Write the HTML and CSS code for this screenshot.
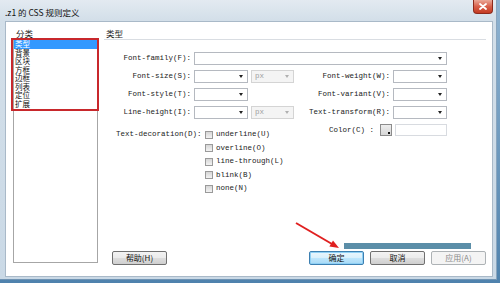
FILE: index.html
```html
<!DOCTYPE html>
<html>
<head>
<meta charset="utf-8">
<link rel="stylesheet" href="styles.css">
</head>
<body>
<div class="win">
  <div class="titlebar">
    <span class="title">.z1 的 CSS 规则定义</span>
    <div class="close">
      <svg width="8" height="7" viewBox="0 0 8 7"><path d="M1 1 L7 6 M7 1 L1 6" stroke="#fff" stroke-width="1.8" stroke-linecap="round"/></svg>
    </div>
  </div>
  <div class="client">
    <div class="cat">
      <div class="cat-label">分类</div>
      <div class="listbox">
        <div class="item sel">类型</div>
        <div class="item">背景</div>
        <div class="item">区块</div>
        <div class="item">方框</div>
        <div class="item">边框</div>
        <div class="item">列表</div>
        <div class="item">定位</div>
        <div class="item">扩展</div>
        <div class="mark"></div>
      </div>
    </div>
    <div class="panel">
      <div class="panel-head">类型</div>
      <div class="form mono">
        <div class="lab">Font-family(F):</div>
        <div class="combo wide"></div>
        <div class="lab">Font-size(S):</div>
        <div class="combo"></div>
        <div class="combo dis">px</div>
        <div class="lab">Font-weight(W):</div>
        <div class="combo"></div>
        <div class="lab">Font-style(T):</div>
        <div class="combo"></div>
        <div></div>
        <div class="lab">Font-variant(V):</div>
        <div class="combo"></div>
        <div class="lab">Line-height(I):</div>
        <div class="combo"></div>
        <div class="combo dis">px</div>
        <div class="lab">Text-transform(R):</div>
        <div class="combo"></div>
      </div>
      <div class="deco mono">
        <div class="deco-lab">Text-decoration(D):</div>
        <div class="checks">
          <div class="chk"><span class="box"></span>underline(U)</div>
          <div class="chk"><span class="box"></span>overline(O)</div>
          <div class="chk"><span class="box"></span>line-through(L)</div>
          <div class="chk"><span class="box"></span>blink(B)</div>
          <div class="chk"><span class="box"></span>none(N)</div>
        </div>
        <div class="color">
          <span class="color-lab">Color(C) :</span>
          <span class="swatch"></span>
          <span class="field"></span>
        </div>
      </div>
      <div class="buttons">
        <div class="btn">帮助(H)</div>
        <div class="btn def push">确定</div>
        <div class="btn">取消</div>
        <div class="btn dis">应用(A)</div>
      </div>
    </div>
  </div>
</div>
<div class="bar"></div>
<svg class="arrow" width="500" height="283" viewBox="0 0 500 283">
  <line x1="296" y1="223" x2="332" y2="244" stroke="#e02020" stroke-width="2"/>
  <polygon points="339,248 329.4,246.5 333,240.5" fill="#e02020"/>
</svg>
</body>
</html>
```

FILE: styles.css
```css
* { box-sizing: border-box; }
html, body { margin: 0; padding: 0; }
body {
  width: 500px;
  height: 283px;
  overflow: hidden;
  position: relative;
  background: linear-gradient(180deg, #8fb3d1 0%, #4f82ad 100%);
  font-family: "Noto Sans CJK SC", "Liberation Sans", sans-serif;
  color: #1a1a1a;
}
.win {
  width: 497px;
  height: 280px;
  display: flex;
  flex-direction: column;
  background: linear-gradient(180deg, #e3eaf1 0px, #d3dfe9 20px, #cad9e6 100%);
  border-right: 1px solid #8aa6bf;
  border-bottom: 1px solid #6f93b3;
}
.titlebar {
  height: 21px;
  display: flex;
  justify-content: space-between;
  align-items: flex-start;
  padding-left: 5px;
}
.title {
  font-size: 8.5px;
  line-height: 10px;
  padding-top: 7px;
  color: #111;
}
.close {
  width: 20px;
  height: 14px;
  margin-right: 3px;
  display: flex;
  align-items: center;
  justify-content: center;
  background: linear-gradient(180deg, #eaa898 0%, #d8604b 50%, #c43b22 100%);
  border: 1px solid #8d2a1c;
  border-top: none;
  border-radius: 0 0 4px 4px;
}
.client {
  height: 256px;
  margin: 0 3px 0 5px;
  background: #fff;
  border: 1px solid #a9b9c8;
  display: flex;
  padding: 5px 6px 0 7px;
}
.cat {
  width: 85px;
  display: flex;
  flex-direction: column;
}
.cat-label {
  height: 12px;
  font-size: 8.5px;
  line-height: 12px;
  padding-left: 3px;
}
.listbox {
  height: 224px;
  border: 1px solid #a6a6a6;
  position: relative;
}
.item {
  height: 8.5px;
  font-size: 7.5px;
  line-height: 8.5px;
  padding-left: 1px;
  color: #111;
}
.item.sel {
  background: #3399ff;
  color: #fff;
}
.mark {
  position: absolute;
  left: -3px;
  top: -2px;
  width: 88px;
  height: 73px;
  border: 2px solid #c8282c;
}
.panel {
  flex: 1;
  margin-left: 6px;
  display: flex;
  flex-direction: column;
}
.panel-head {
  height: 13px;
  font-size: 8.5px;
  line-height: 12px;
  padding-left: 2px;
  border-bottom: 1px solid #d9dde2;
}
.mono {
  font-family: "Liberation Mono", "DejaVu Sans Mono", monospace;
  font-size: 7.5px;
  color: #222;
}
.form {
  margin-top: 12px;
  display: grid;
  grid-template-columns: 87px 54px 43px 93px 54px;
  grid-auto-rows: 13px;
  column-gap: 3px;
  row-gap: 5px;
}
.lab {
  text-align: right;
  line-height: 13px;
  white-space: nowrap;
}
.combo {
  position: relative;
  border: 1px solid #b5b9c0;
  background: #fff;
  line-height: 11px;
  padding-left: 3px;
}
.combo::after {
  content: "";
  position: absolute;
  right: 4px;
  top: 4px;
  border-left: 2.5px solid transparent;
  border-right: 2.5px solid transparent;
  border-top: 3px solid #222;
}
.combo.wide { grid-column: 2 / 6; }
.combo.dis {
  background: #f4f4f4;
  border-color: #d4d4d4;
  color: #a0a0a0;
}
.combo.dis::after { border-top-color: #b0b0b0; }
.deco {
  margin-top: 5px;
  display: flex;
  align-items: flex-start;
  padding-left: 12px;
}
.deco-lab {
  width: 89px;
  padding-top: 4px;
  line-height: 13.5px;
  white-space: nowrap;
}
.checks {
  width: 124px;
  padding-top: 4px;
}
.chk {
  height: 13.5px;
  line-height: 13.5px;
  display: flex;
  align-items: center;
  white-space: nowrap;
}
.box {
  width: 8px;
  height: 8px;
  margin-right: 3px;
  border: 1px solid #9a9a9a;
  background: linear-gradient(180deg, #d6d6d6, #f3f3f3);
}
.color {
  display: flex;
  align-items: center;
  height: 12px;
}
.color-lab {
  width: 51px;
  white-space: nowrap;
}
.swatch {
  position: relative;
  width: 12px;
  height: 12px;
  border: 1px solid #8c8c8c;
  background: linear-gradient(180deg, #eeeeee, #d6d6d6);
  margin-right: 3px;
}
.swatch::after {
  content: "";
  position: absolute;
  right: 1px;
  bottom: 1px;
  width: 2px;
  height: 2px;
  background: #111;
}
.field {
  width: 52px;
  height: 12px;
  border: 1px solid #d8dbe0;
  background: #fff;
}
.buttons {
  margin-top: auto;
  margin-bottom: 11px;
  display: flex;
  padding-left: 8px;
}
.btn {
  width: 55px;
  height: 14px;
  border: 1px solid #707070;
  border-radius: 2px;
  background: linear-gradient(180deg, #f3f3f3 0%, #ebebeb 50%, #dddddd 51%, #cfcfcf 100%);
  font-size: 8px;
  line-height: 12px;
  text-align: center;
  color: #111;
  margin-left: 6px;
}
.btn:first-child { margin-left: 0; }
.btn.push { margin-left: auto; }
.btn.def {
  border-color: #3c7fb1;
  background: linear-gradient(180deg, #eaf6fd 0%, #d9f0fc 50%, #bee6fd 51%, #a7d9f5 100%);
  box-shadow: inset 0 0 0 1px #8fd0f5;
}
.btn.dis {
  border-color: #adb2b5;
  background: #f4f4f4;
  color: #8a8a8a;
}
.bar {
  position: absolute;
  left: 344px;
  top: 243px;
  width: 127px;
  height: 6px;
  background: #5b8ea8;
}
.arrow {
  position: absolute;
  left: 0;
  top: 0;
  pointer-events: none;
}
```
